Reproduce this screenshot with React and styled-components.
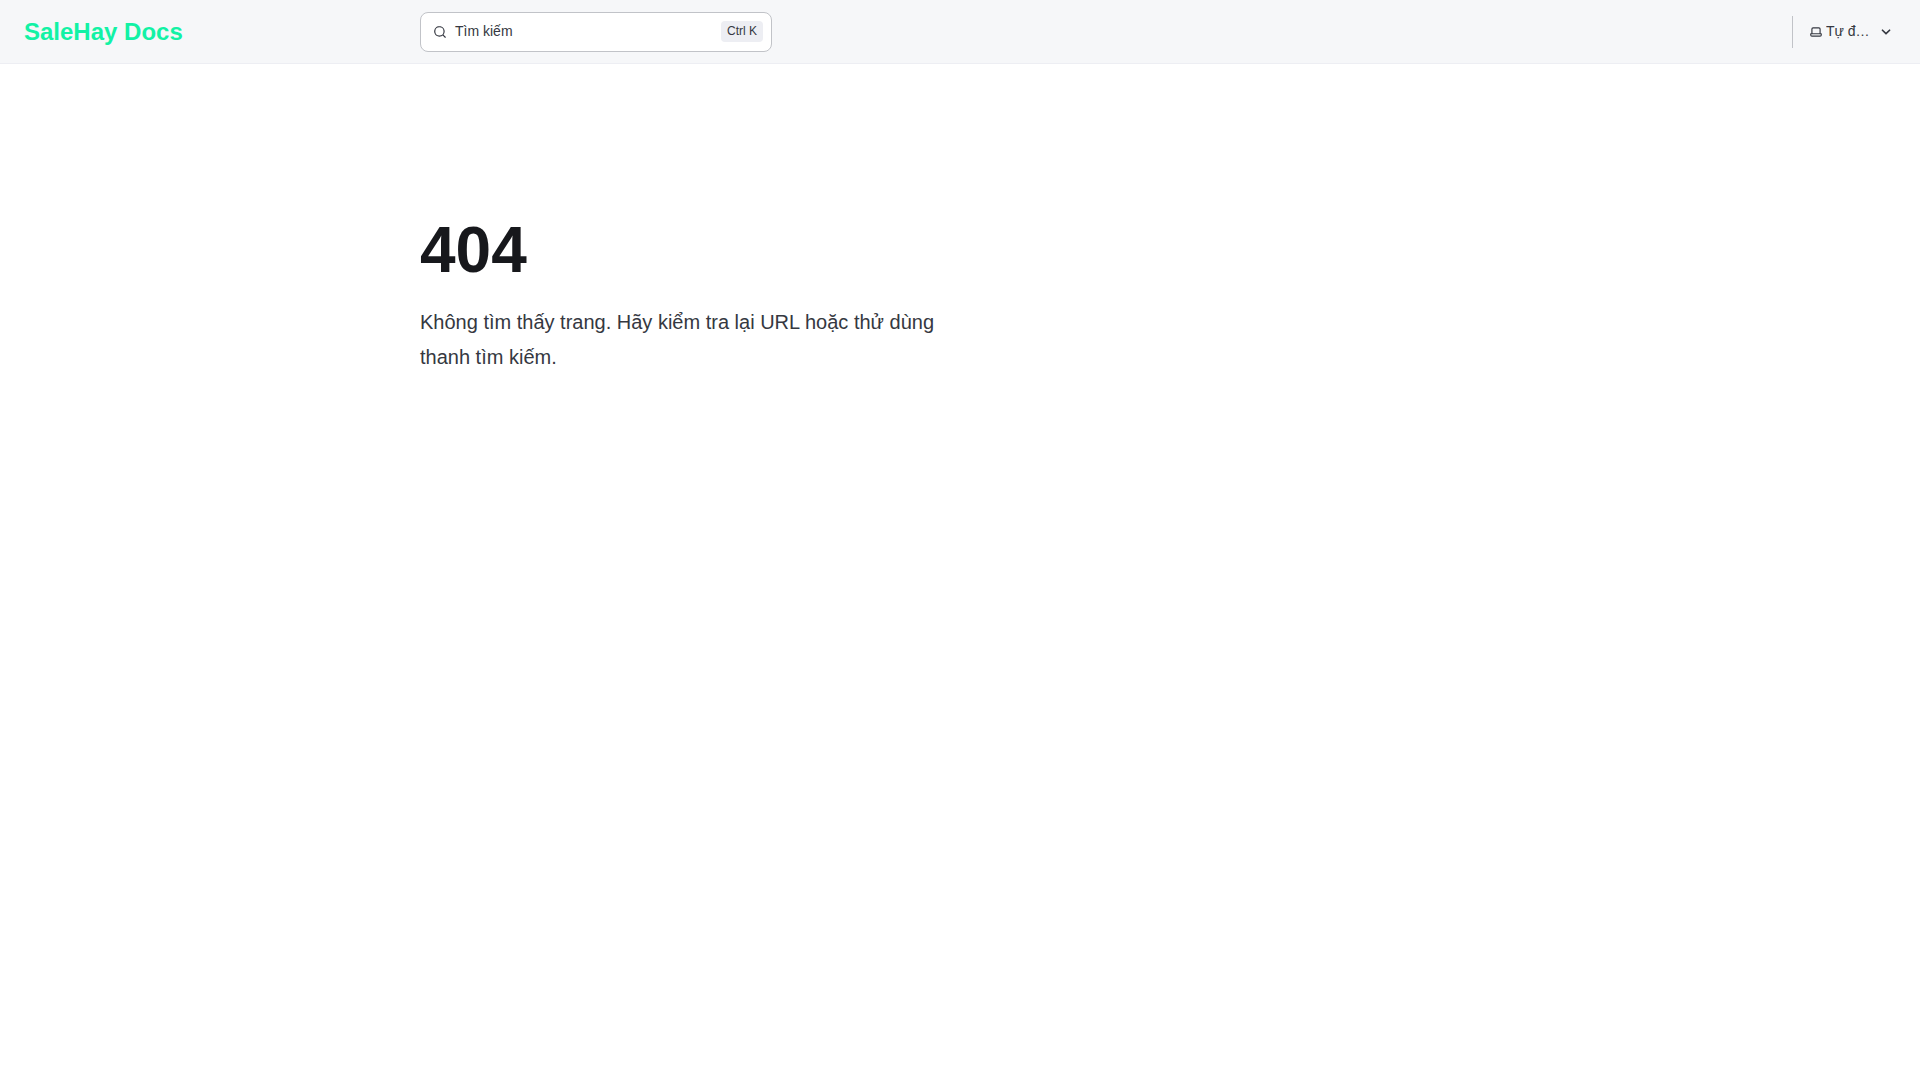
import React, { useState } from "react";
import styled, { createGlobalStyle, css, ThemeProvider } from "styled-components";

const theme = {
  white: "#ffffff",
  heading: "#17181c",
  text: "#353841",
  line: "#c1c3c8",
  shade: "#edeef3",
  nav: "#f6f7f9",
  brand: "#12f2a5",
};

const GlobalStyle = createGlobalStyle`
  *, *::before, *::after {
    box-sizing: border-box;
  }

  body {
    margin: 0;
    background: ${theme.white};
    color: ${theme.text};
    font-family: "Liberation Sans", Arial, sans-serif;
    font-size: 16px;
    line-height: 28px;
  }
`;

const Header = styled.header`
  display: grid;
  grid-template-columns: minmax(max-content, 1fr) minmax(0, 1080px) minmax(max-content, 1fr);
  align-items: center;
  height: 64px;
  padding: 0 24px;
  background: ${({ theme }) => theme.nav};
  border-bottom: 1px solid ${({ theme }) => theme.shade};
`;

const SiteTitle = styled.a`
  justify-self: start;
  color: ${({ theme }) => theme.brand};
  font-size: 24px;
  font-weight: 600;
  text-decoration: none;
  white-space: nowrap;
`;

const controlMixin = css`
  color: ${({ theme }) => theme.text};
  font-family: inherit;
  font-size: 14px;
  line-height: 17px;
  cursor: pointer;
`;

const SearchButton = styled.button`
  ${controlMixin}
  display: flex;
  align-items: center;
  gap: 8px;
  width: 100%;
  max-width: 352px;
  height: 40px;
  padding: 0 8px 0 12px;
  background: ${({ theme }) => theme.white};
  border: 1px solid ${({ theme }) => theme.line};
  border-radius: 8px;
`;

const Shortcut = styled.kbd`
  margin-left: auto;
  padding: 0 6px;
  border-radius: 4px;
  background: ${({ theme }) => theme.shade};
  font-family: inherit;
  font-size: 12px;
  line-height: 21px;
`;

const Tools = styled.div`
  display: flex;
  align-items: center;
  justify-self: end;
  height: 32px;
  padding-left: 16px;
  border-left: 1px solid ${({ theme }) => theme.line};
`;

const ThemeLabel = styled.label`
  display: flex;
  align-items: center;
  color: ${({ theme }) => theme.text};
`;

const ThemeSelect = styled.select`
  ${controlMixin}
  appearance: none;
  width: 44px;
  margin: 0 6px 0 3px;
  padding: 0;
  border: 0;
  background: transparent;
  text-overflow: ellipsis;
`;

const Icon = styled.svg`
  flex: none;
  width: ${({ $size }) => $size}px;
  height: ${({ $size }) => $size}px;
  fill: currentColor;
`;

const Main = styled.main`
  max-width: 1128px;
  margin: 0 auto;
  padding: 148px 24px;
`;

const Title = styled.h1`
  margin: 0 0 16px;
  color: ${({ theme }) => theme.heading};
  font-size: 64px;
  font-weight: 600;
  line-height: 77px;
`;

const Tagline = styled.p`
  max-width: 50ch;
  margin: 0;
  font-size: 20px;
  line-height: 35px;
`;

const paths = {
  search: "M21.71 20.29 18 16.61A9 9 0 1 0 16.61 18l3.68 3.68a.999.999 0 0 0 1.42 0 1 1 0 0 0 0-1.39ZM11 18a7 7 0 1 1 0-14 7 7 0 0 1 0 14Z",
  laptop: "M21 14h-1V7a3 3 0 0 0-3-3H7a3 3 0 0 0-3 3v7H3a1 1 0 0 0-1 1v2a3 3 0 0 0 3 3h14a3 3 0 0 0 3-3v-2a1 1 0 0 0-1-1ZM6 7a1 1 0 0 1 1-1h10a1 1 0 0 1 1 1v7H6V7Zm14 10a1 1 0 0 1-1 1H5a1 1 0 0 1-1-1v-1h16v1Z",
  caret: "M17 9.17a1 1 0 0 0-1.41 0L12 12.71 8.46 9.17a1 1 0 1 0-1.41 1.42l4.24 4.24a1.002 1.002 0 0 0 1.42 0L17 10.59a1.002 1.002 0 0 0 0-1.42Z",
};

const Glyph = ({ name, size = 14 }) => (
  <Icon $size={size} viewBox="0 0 24 24" aria-hidden="true">
    <path d={paths[name]} />
  </Icon>
);

const ThemePicker = () => {
  const [mode, setMode] = useState("auto");

  return <ThemeLabel>
    <Glyph name="laptop" />
    <ThemeSelect
      aria-label="Chọn giao diện"
      value={mode}
      onChange={(e) => setMode(e.target.value)}
    >
      <option value="dark">Tối</option>
      <option value="light">Sáng</option>
      <option value="auto">Tự động</option>
    </ThemeSelect>
    <Glyph name="caret" size={20} />
  </ThemeLabel>;
};

export default () => (
  <ThemeProvider theme={theme}>
    <GlobalStyle />
    <Header>
      <SiteTitle href="/">SaleHay Docs</SiteTitle>
      <SearchButton type="button">
        <Glyph name="search" />
        <span>Tìm kiếm</span>
        <Shortcut>Ctrl K</Shortcut>
      </SearchButton>
      <Tools>
        <ThemePicker />
      </Tools>
    </Header>
    <Main>
      <Title>404</Title>
      <Tagline>Không tìm thấy trang. Hãy kiểm tra lại URL hoặc thử dùng thanh tìm kiếm.</Tagline>
    </Main>
  </ThemeProvider>
);
